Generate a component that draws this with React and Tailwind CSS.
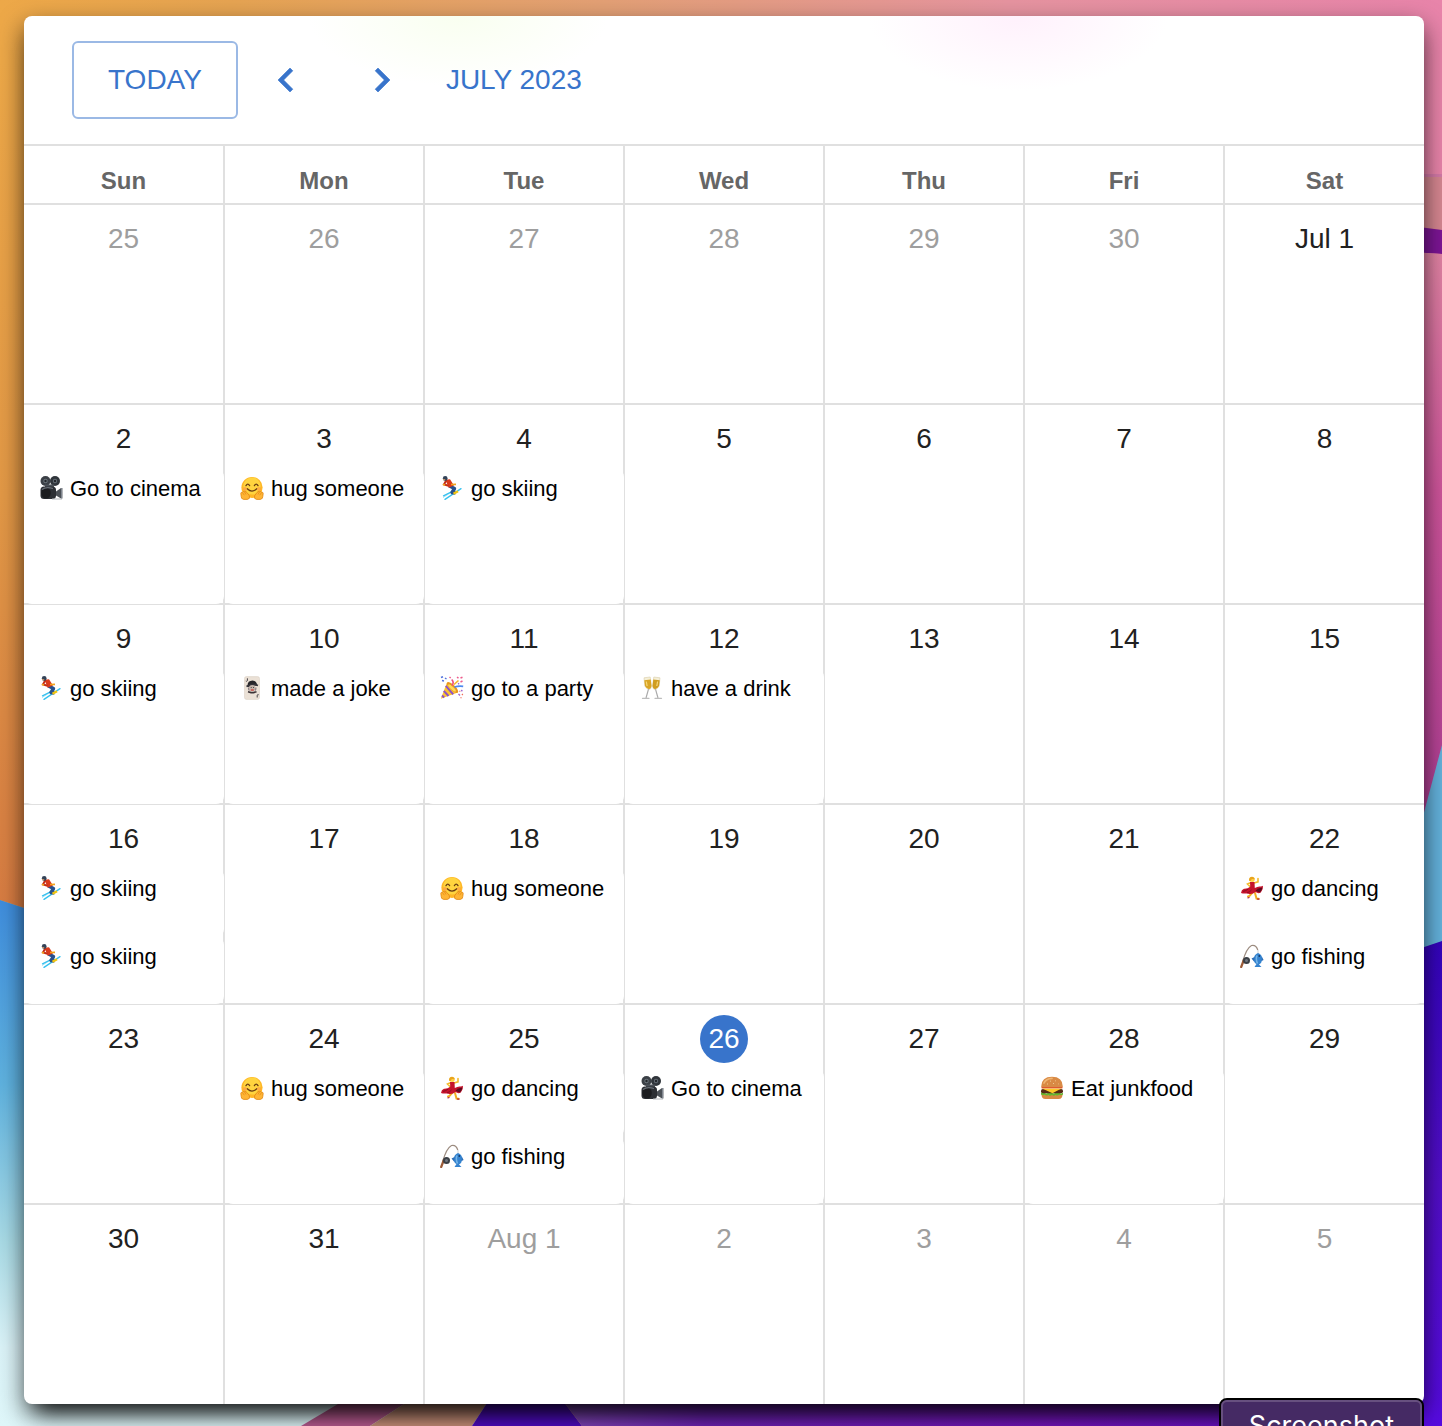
import React from "react";

function Camera() {
  return (
    <>
      <circle cx="6.5" cy="5" r="5" fill="#3b4046" />
      <circle cx="16" cy="5" r="5" fill="#30353b" />
      <circle cx="6.5" cy="5" r="2.2" fill="#6c747c" />
      <circle cx="16" cy="5" r="2.2" fill="#646c75" />
      <circle cx="6.5" cy="5" r="1.2" fill="#22262a" />
      <circle cx="16" cy="5" r="1.2" fill="#22262a" />
      <rect x="6" y="8.5" width="9" height="3" fill="#4b5158" />
      <rect x="1.5" y="10.5" width="15.5" height="12.5" rx="3.5" fill="#2c2f34" />
      <ellipse cx="7" cy="17" rx="4.8" ry="5.6" fill="#1b1c1f" />
      <path d="M3 13.5q4-3 11-1" stroke="#6a7078" strokeWidth="1.2" fill="none" />
      <path d="M17 15.5l5-3.5h1.4v10.5H22L17 19.5z" fill="#4b5056" />
      <path d="M22.6 12v10.5" stroke="#868d95" strokeWidth="1" />
      <path d="M13 23h10" stroke="#b5b9bd" strokeWidth="1" />
    </>
  );
}

function Hug() {
  return (
    <>
      <circle cx="12" cy="11.5" r="10.6" fill="#ffb726" />
      <circle cx="12" cy="10" r="8.6" fill="#ffd43f" />
      <path d="M6 9.6q1.8-3 3.6 0M14.4 9.6q1.8-3 3.6 0" stroke="#6b3d12" strokeWidth="1.3" fill="none" strokeLinecap="round" />
      <path d="M7.2 12.8q4.8 4.6 9.6 0" stroke="#6b3d12" strokeWidth="1.3" fill="none" strokeLinecap="round" />
      <circle cx="5" cy="13" r="1.9" fill="#ff9a45" opacity=".7" />
      <circle cx="19" cy="13" r="1.9" fill="#ff9a45" opacity=".7" />
      <path d="M.8 17.4q.2-1.7 1.7-1 .6-1.6 2.1-.6 1.4-1 2.3.6l2.5 3.4q1 3.2-2 3.6H3.6Q1 22.8 1.2 20.4z" fill="#ffb535" stroke="#e18612" strokeWidth=".8" />
      <path d="M23.2 17.4q-.2-1.7-1.7-1-.6-1.6-2.1-.6-1.4-1-2.3.6l-2.5 3.4q-1 3.2 2 3.6h3.8q2.6-.6 2.4-3z" fill="#ffb535" stroke="#e18612" strokeWidth=".8" />
      <path d="M2.5 16.6l1.8 2.6M4.7 16.1l1.3 2.4M21.5 16.6l-1.8 2.6M19.3 16.1L18 18.5" stroke="#e18612" strokeWidth=".7" />
    </>
  );
}

function Skier() {
  return (
    <>
      <path d="M3 21.5L15.5 13.5" stroke="#9bdcf2" strokeWidth=".9" />
      <path d="M3.5 19.8L15 14M5 23.4L21 12.6" stroke="#35c1ef" strokeWidth="1.3" strokeLinecap="round" />
      <path d="M9.5 10l5 2.5-2.500 4 3.5.5" stroke="#27508c" strokeWidth="3.4" fill="none" strokeLinejoin="round" />
      <path d="M5.5 3.8l4.5-.5 4 6.2-5.5 2.2z" fill="#d93a1c" />
      <path d="M6.200 4.500L4 8.500l4.500 1.300" stroke="#c22d18" strokeWidth="2" fill="none" />
      <path d="M3 8.300l2 .8M11 8.500l5-.2" stroke="#f2a21b" strokeWidth="1.7" />
      <path d="M13.500 17.800l4.500-2.600" stroke="#f1c40f" strokeWidth="2.3" />
      <circle cx="5.2" cy="2.5" r="2.4" fill="#334257" />
      <path d="M3.200 3.300l2 .7" stroke="#d7a06e" strokeWidth="1.3" />
    </>
  );
}

function Joker() {
  return (
    <>
      <rect x="4.5" y=".6" width="15" height="22.8" rx="1.8" fill="#ebe1d6" stroke="#d9cdc1" strokeWidth=".5" />
      <path d="M7.500 9.500q0-4.800 5-5 3.300.2 4.300 3l.5 2.500-3-.8-6.200 1.800z" fill="#26262a" />
      <path d="M6.500 10.500q5.500-3.200 11.500-1" stroke="#35343a" strokeWidth="1.7" fill="none" />
      <circle cx="12.2" cy="12" r="3.1" fill="#c2b2a9" />
      <path d="M8.700 11.500q-.6 2 .8 3M15.700 11.500q.6 2-.8 3" stroke="#8b8085" strokeWidth="1.2" fill="none" />
      <path d="M10.800 11.500h.8M13 11.500h.8" stroke="#333" strokeWidth="1" />
      <path d="M8 15.800l3 .8h2.500l3-.8" stroke="#3b3437" strokeWidth="1.6" fill="none" />
      <path d="M10.800 14h3" stroke="#cf3a32" strokeWidth="1.2" />
      <path d="M7.400 2.300v2.400q-.6 1-1.600.3M17.200 21.500v-2.400q.5-1 1.500-.3" stroke="#4a474b" strokeWidth="1" fill="none" />
    </>
  );
}

function Party() {
  return (
    <>
      <path d="M7 6.500L.8 22.800l17-6.200q-2-6-10.800-10.100z" fill="#fbc531" />
      <path d="M5.800 9.800l7.400 8.500M3.800 14.800l4.700 5.200M2 19.500l2.200 2" stroke="#8e52c6" strokeWidth="2" />
      <ellipse cx="12.5" cy="11.5" rx="7.4" ry="2.7" transform="rotate(43 12.5 11.5)" fill="#e8951f" />
      <ellipse cx="12" cy="12" rx="5" ry="1.5" transform="rotate(43 12 12)" fill="#ffd95a" />
      <path d="M12 9.500q2.500-3-.3-6" stroke="#ee4f7e" strokeWidth="1.6" fill="none" />
      <path d="M14.500 11q4-1.200 8.700-.6" stroke="#4f88ee" strokeWidth="1.7" fill="none" />
      <path d="M14 8.500l4.500-4" stroke="#f5b82e" strokeWidth="1.6" />
      <path d="M1 1.500l2-.8M2 4.500l2 .5M5 2l1.500 1" stroke="#5373dd" strokeWidth="1.5" />
      <path d="M9.500 1l1.200 1M17 1.200l1.500 1M20.500 2l2-.8M20.500 6l2-1" stroke="#ed5c8c" strokeWidth="1.5" />
      <path d="M18 8l1.200-.6M21 14.500l1.500.3M18.500 18l1.500 1.500" stroke="#9d66d4" strokeWidth="1.4" />
      <path d="M22 18l.8 1M20.500 21.500l1 .5M19.500 15l.8.5" stroke="#ef6a58" strokeWidth="1.3" />
    </>
  );
}

function Toast() {
  return (
    <>
      <path d="M4 1.800l6.200-.8 1.300 9.200q-.2 3-2.400 3.300Q6.300 12.900 4.800 10z" fill="#f5efd6" stroke="#d8cda9" strokeWidth=".6" />
      <path d="M13.800 1L20 1.800l-.8 8.200q-1.500 2.900-4.300 3.500-2.200-.3-2.400-3.300z" fill="#f5efd6" stroke="#d8cda9" strokeWidth=".6" />
      <path d="M4.300 4.200l6.400-.6.800 6.500q-.3 2.700-2.400 3.100Q6.300 12.500 5 10z" fill="#d9a526" />
      <path d="M13.300 3.600l6.400.6-.7 5.800q-1.300 2.500-4.100 3.200-2.100-.4-2.400-3.100z" fill="#d09d20" />
      <path d="M6.300 5.500l.8 4.500M17.600 5.500l-.8 4.500" stroke="#f6d878" strokeWidth="1.2" />
      <path d="M8.500 13.200L6 22M15.500 13.200L18 22" stroke="#ababab" strokeWidth="1.2" />
      <path d="M2.500 22.300h6.500M15 22.300h6.500" stroke="#bdbdbd" strokeWidth="1.3" strokeLinecap="round" />
    </>
  );
}

function Dancer() {
  return (
    <>
      <path d="M11 6.500L7.500 8l2.500 2.500M14 7l4-1.200V2.500" stroke="#f5b929" strokeWidth="1.6" fill="none" strokeLinecap="round" />
      <path d="M12 17l-2.500 3-1.500.5M15 17l1.500 5.500 2 .2" stroke="#f2ad22" strokeWidth="2" fill="none" strokeLinecap="round" />
      <path d="M10 6h4.500l.3 6q3.200-2 5.700-1.500 1.500-.3 2.500-.7.4 4-2.200 6.700-2.600 1.500-5.300-.5-3.500 3.200-8 1.500Q3 17.800 1 17q.3-3.200 3-4.300 3.400.3 6.200-2z" fill="#c6132b" />
      <path d="M15.500 14.500q2.600-2.500 6.800-3-.2 3-2.300 4.700-2 .4-4.500-1.700z" fill="#5d0a1e" />
      <path d="M3 15.500q3-.8 5-2.300M7 17q3-1.200 4.500-3" stroke="#8d0b22" strokeWidth="1" fill="none" />
      <circle cx="12.2" cy="3.6" r="2.5" fill="#ffd04a" />
      <path d="M9 4.500q-.2-4.200 4-3.600 2.200.6 1.500 2.500-2.500-.8-3.500.5-.3 2-2 .6z" fill="#e9a51d" />
      <path d="M9.500 21.500l-2 .5M17 23l2.500.2" stroke="#b3152a" strokeWidth="1.2" />
    </>
  );
}

function Fishing() {
  return (
    <>
      <path d="M2.500 18Q6.500 4 11.500 1.500q4.500-1 6.300 4.500" stroke="#9c8c80" strokeWidth="1.2" fill="none" />
      <path d="M18 6v4" stroke="#c7c7c7" strokeWidth=".8" />
      <path d="M3.800 16L1.200 23" stroke="#9b5a37" strokeWidth="2.2" strokeLinecap="round" />
      <circle cx="6.5" cy="16.5" r="3.5" fill="#3a3f45" />
      <circle cx="6.5" cy="16.5" r="1.5" fill="#6f7780" />
      <path d="M18 9q4.500 1.500 4.300 6.500-.5 3.500-3.300 5l2.500 2.500h-7l2-3q-3-1.500-2.800-5Q14 10.500 18 9z" fill="#3583cf" />
      <path d="M14.500 13l-3 1.500 2.500 3M22 13l1.600 3-2 1" fill="#2c6db6" />
      <path d="M17 11.500q-1.500 3.500.5 8" stroke="#75b6ea" strokeWidth="1.5" fill="none" />
      <circle cx="19.3" cy="12" r=".9" fill="#153a68" />
    </>
  );
}

function Burger() {
  return (
    <>
      <path d="M1.500 18h21q.3 5-4 5h-13q-4.300 0-4-5z" fill="#d88a42" />
      <path d="M1 16.800q2-1.500 3.600 0t3.700 0 3.700 0 3.700 0 3.700 0 3.600 0v1.700q-1.800 1.300-3.600.3-2 1.400-3.700.2-2 1.300-3.700 0-2 1.300-3.700 0-2 1.200-3.700-.2-1.800 1-3.600-.3z" fill="#65b82d" />
      <rect x="1" y="13" width="22" height="4.2" rx="2" fill="#552914" />
      <path d="M1.500 12.500h21l-4 1.500-6 3.200-6.500-3z" fill="#ffc928" />
      <path d="M1.500 10.800h21v1.500h-21z" fill="#dc4a2e" />
      <path d="M1.200 10.500Q1.500.8 12 .8t10.800 9.700q0 .8-1 .8H2.200q-1 0-1-.8z" fill="#d98a45" />
      <path d="M4 7Q6 2.500 12 2.300" stroke="#efb573" strokeWidth="1.7" fill="none" strokeLinecap="round" />
      <path d="M10 5l1 .3M15 4.500l.8.5M13 7.500h1M18 7.500l.6.5M7 8h1" stroke="#f6d9a4" strokeWidth=".8" />
    </>
  );
}

const CINEMA = { Icon: Camera, label: "Go to cinema" };
const HUG = { Icon: Hug, label: "hug someone" };
const SKI = { Icon: Skier, label: "go skiing" };
const JOKE = { Icon: Joker, label: "made a joke" };
const PARTY = { Icon: Party, label: "go to a party" };
const DRINK = { Icon: Toast, label: "have a drink" };
const DANCE = { Icon: Dancer, label: "go dancing" };
const FISH = { Icon: Fishing, label: "go fishing" };
const FOOD = { Icon: Burger, label: "Eat junkfood" };

const WEEKDAYS = ["Sun", "Mon", "Tue", "Wed", "Thu", "Fri", "Sat"];

const day = (label, events = []) => ({ label, events });
const other = (label) => ({ label, events: [], outside: true });

const WEEKS = [
  [other("25"), other("26"), other("27"), other("28"), other("29"), other("30"), day("Jul 1")],
  [day("2", [CINEMA]), day("3", [HUG]), day("4", [SKI]), day("5"), day("6"), day("7"), day("8")],
  [day("9", [SKI]), day("10", [JOKE]), day("11", [PARTY]), day("12", [DRINK]), day("13"), day("14"), day("15")],
  [day("16", [SKI, SKI]), day("17"), day("18", [HUG]), day("19"), day("20"), day("21"), day("22", [DANCE, FISH])],
  [
    day("23"),
    day("24", [HUG]),
    day("25", [DANCE, FISH]),
    { label: "26", events: [CINEMA], today: true },
    day("27"),
    day("28", [FOOD]),
    day("29"),
  ],
  [day("30"), day("31"), other("Aug 1"), other("2"), other("3"), other("4"), other("5")],
];

function Wallpaper() {
  return (
    <svg
      aria-hidden="true"
      className="absolute inset-0 h-full w-full"
      viewBox="0 0 1442 1426"
      preserveAspectRatio="none"
    >
      <defs>
        <linearGradient id="top" x1="0" x2="1" y1="0" y2="0">
          <stop offset="0" stopColor="#eda848" />
          <stop offset=".16" stopColor="#e6a452" />
          <stop offset=".42" stopColor="#e3a075" />
          <stop offset=".7" stopColor="#e694a0" />
          <stop offset="1" stopColor="#e884aa" />
        </linearGradient>
        <linearGradient id="left" x1="0" x2="0" y1="0" y2="1">
          <stop offset="0" stopColor="#eda848" />
          <stop offset=".5" stopColor="#e29846" />
          <stop offset="1" stopColor="#d67a42" />
        </linearGradient>
        <linearGradient id="sea" x1="0" x2="0" y1="0" y2="1">
          <stop offset="0" stopColor="#3f8ddd" />
          <stop offset=".35" stopColor="#5fb2df" />
          <stop offset=".65" stopColor="#a9dbe6" />
          <stop offset=".85" stopColor="#dbf3f8" />
          <stop offset="1" stopColor="#dff7fa" />
        </linearGradient>
        <linearGradient id="pink" x1="0" x2="0" y1="0" y2="1">
          <stop offset="0" stopColor="#e184a4" />
          <stop offset=".4" stopColor="#ce559b" />
          <stop offset="1" stopColor="#ad3d94" />
        </linearGradient>
        <linearGradient id="indigo" x1="0" x2="0" y1="0" y2="1">
          <stop offset="0" stopColor="#3404bd" />
          <stop offset=".5" stopColor="#530fc9" />
          <stop offset="1" stopColor="#560be0" />
        </linearGradient>
        <linearGradient id="floor" x1="0" x2="1" y1="0" y2="0">
          <stop offset="0" stopColor="#8550b8" />
          <stop offset=".2" stopColor="#6d22b4" />
          <stop offset=".6" stopColor="#7414bd" />
          <stop offset="1" stopColor="#5d10c8" />
        </linearGradient>
      </defs>
      <rect width="1442" height="1426" fill="url(#top)" />
      <path d="M0 60H100V933L0 900z" fill="url(#left)" />
      <path d="M0 900L100 933V1350H520V1426H0z" fill="url(#sea)" />
      <path d="M1380 174H1442V230H1380z" fill="#d68791" />
      <path d="M1380 174H1442V177H1380z" fill="#d47aa8" />
      <path d="M1380 222L1442 230V254L1380 250z" fill="#7d1695" />
      <path d="M1380 250L1442 254V850H1380z" fill="url(#pink)" />
      <path d="M1442 745V960H1406V880z" fill="#64b2dc" />
      <path d="M1380 962L1442 941V1426H1380z" fill="url(#indigo)" />
      <path d="M412 1360H472L370 1426H301z" fill="#bb5b92" />
      <path d="M472 1360H515L472 1426H370z" fill="#c99079" />
      <path d="M515 1360H532L582 1426H472z" fill="#4e0bc2" />
      <path d="M532 1360H1400V1426H582z" fill="url(#floor)" />
    </svg>
  );
}

function Toolbar() {
  return (
    <header className="flex h-[130px] items-center rounded-t-lg border-b-2 border-[#e0e0e0] bg-[radial-gradient(ellipse_150px_70px_at_31%_0,#f9fff0,transparent),radial-gradient(ellipse_150px_75px_at_71%_0,#fff1fc,transparent)] pl-12 text-[28px] leading-10 text-[#3874cb]">
      <button type="button" className="h-[78px] rounded-md border-2 border-[#9bb9e5] px-[34px]">
        TODAY
      </button>
      <button type="button" aria-label="Previous month" className="p-6">
        <svg className="size-12" viewBox="0 0 24 24" fill="currentColor">
          <path d="M15.410 7.410 14 6l-6 6 6 6 1.410-1.410L10.830 12z" stroke="currentColor" strokeWidth=".3" />
        </svg>
      </button>
      <button type="button" aria-label="Next month" className="p-6">
        <svg className="size-12" viewBox="0 0 24 24" fill="currentColor">
          <path d="M10 6 8.590 7.410 13.170 12l-4.580 4.590L10 18l6-6z" stroke="currentColor" strokeWidth=".3" />
        </svg>
      </button>
      <button type="button" className="px-4">
        JULY 2023
      </button>
    </header>
  );
}

function EventItem({ event }) {
  const { Icon, label } = event;
  return (
    <li className="flex shrink-0 basis-[68px] flex-col rounded-lg bg-white last:flex-1">
      <button type="button" className="flex h-[38px] items-center gap-[7px] pl-[15px] text-left text-[22px] whitespace-nowrap text-black">
        <svg aria-hidden="true" className="size-6 shrink-0" viewBox="0 0 24 24">
          <Icon />
        </svg>
        {label}
      </button>
    </li>
  );
}

function DayCell({ date }) {
  const tone = date.today
    ? "bg-[#3874cb] text-white"
    : date.outside
      ? "text-[#9e9e9e]"
      : "text-[#212121]";
  return (
    <td className="group h-[200px] border-2 border-[#e0e0e0] p-0 align-top">
      <div className="flex h-full flex-col pt-[10px]">
        <time className={`mx-auto flex h-12 min-w-12 items-center justify-center rounded-full text-[28px] ${tone}`}>
          {date.label}
        </time>
        {date.events.length > 0 && (
          <ul className="relative mt-[6px] -mr-px -mb-px flex grow flex-col group-last:mr-0">
            {date.events.map((event, i) => (
              <EventItem key={i} event={event} />
            ))}
          </ul>
        )}
      </div>
    </td>
  );
}

export default function App() {
  return (
    <div className="relative min-h-screen overflow-hidden pt-4 pr-[18px] pb-[22px] pl-6 font-['Liberation_Sans',Arial,sans-serif]">
      <Wallpaper />
      <main className="relative rounded-lg bg-white shadow-[0_20px_20px_-14px_rgba(0,0,0,0.8),0_10px_24px_0_rgba(0,0,0,0.6)]">
        <Toolbar />
        <table className="w-full table-fixed border-collapse border-hidden">
          <thead>
            <tr>
              {WEEKDAYS.map((name) => (
                <th
                  key={name}
                  scope="col"
                  className="h-[58px] border-2 border-[#e0e0e0] p-0 pt-3 text-2xl font-bold text-[#666666]"
                >
                  {name}
                </th>
              ))}
            </tr>
          </thead>
          <tbody>
            {WEEKS.map((week, i) => (
              <tr key={i}>
                {week.map((date) => (
                  <DayCell key={date.label} date={date} />
                ))}
              </tr>
            ))}
          </tbody>
        </table>
        <button
          type="button"
          className="absolute top-full right-0 -mt-[6px] rounded-lg border-2 border-black bg-[#452a64] font-[Inter,sans-serif] text-[27px] text-white"
        >
          <span className="block rounded-md border-2 border-[#67507f] px-[26px] py-2 leading-8">Screenshot</span>
        </button>
      </main>
    </div>
  );
}
